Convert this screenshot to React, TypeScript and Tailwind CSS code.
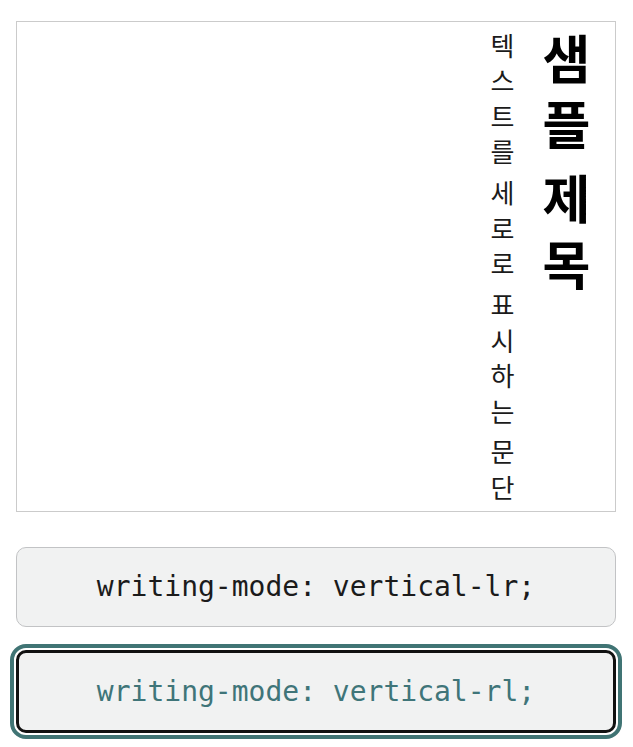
export default function App() {
  return (
    <div className="w-[633px] h-[747px] bg-white pt-[21px] font-['Roboto','Noto_Sans_CJK_KR',sans-serif]">
      <div className="ml-4 w-[600px] h-[491px] border border-[#cbcbcb] [writing-mode:vertical-rl] pt-[11px] pr-[9px] font-['Noto_Sans_CJK_KR',sans-serif]">
        <h1 className="m-0 text-[52px] font-bold leading-[80px] tracking-[14px] [word-spacing:-18px] text-black">
          샘플 제목
        </h1>
        <p className="m-0 text-[26px] leading-[48px] tracking-[9.5px] [word-spacing:-10px] text-[#1b1b1b]">
          텍스트를 세로로 표시하는 문단
        </p>
      </div>

      <div className="mt-[35px] ml-4 w-[600px] flex flex-col gap-[23px]">
        <div className="h-[80px] rounded-[10px] border border-[#c2c3c5] bg-[#f1f2f2] flex items-center justify-center">
          <span className="font-['DejaVu_Sans_Mono',monospace] text-[28px] text-[#1b1b1b]">
            writing-mode: vertical-lr;
          </span>
        </div>
        <div className="h-[83px] rounded-[10px] border-[3px] border-[#111] bg-[#f1f2f2] outline-[4px] outline-solid outline-[#407474] outline-offset-[2px] flex items-center justify-center">
          <span className="font-['DejaVu_Sans_Mono',monospace] text-[28px] text-[#3f7579]">
            writing-mode: vertical-rl;
          </span>
        </div>
      </div>
    </div>
  )
}
